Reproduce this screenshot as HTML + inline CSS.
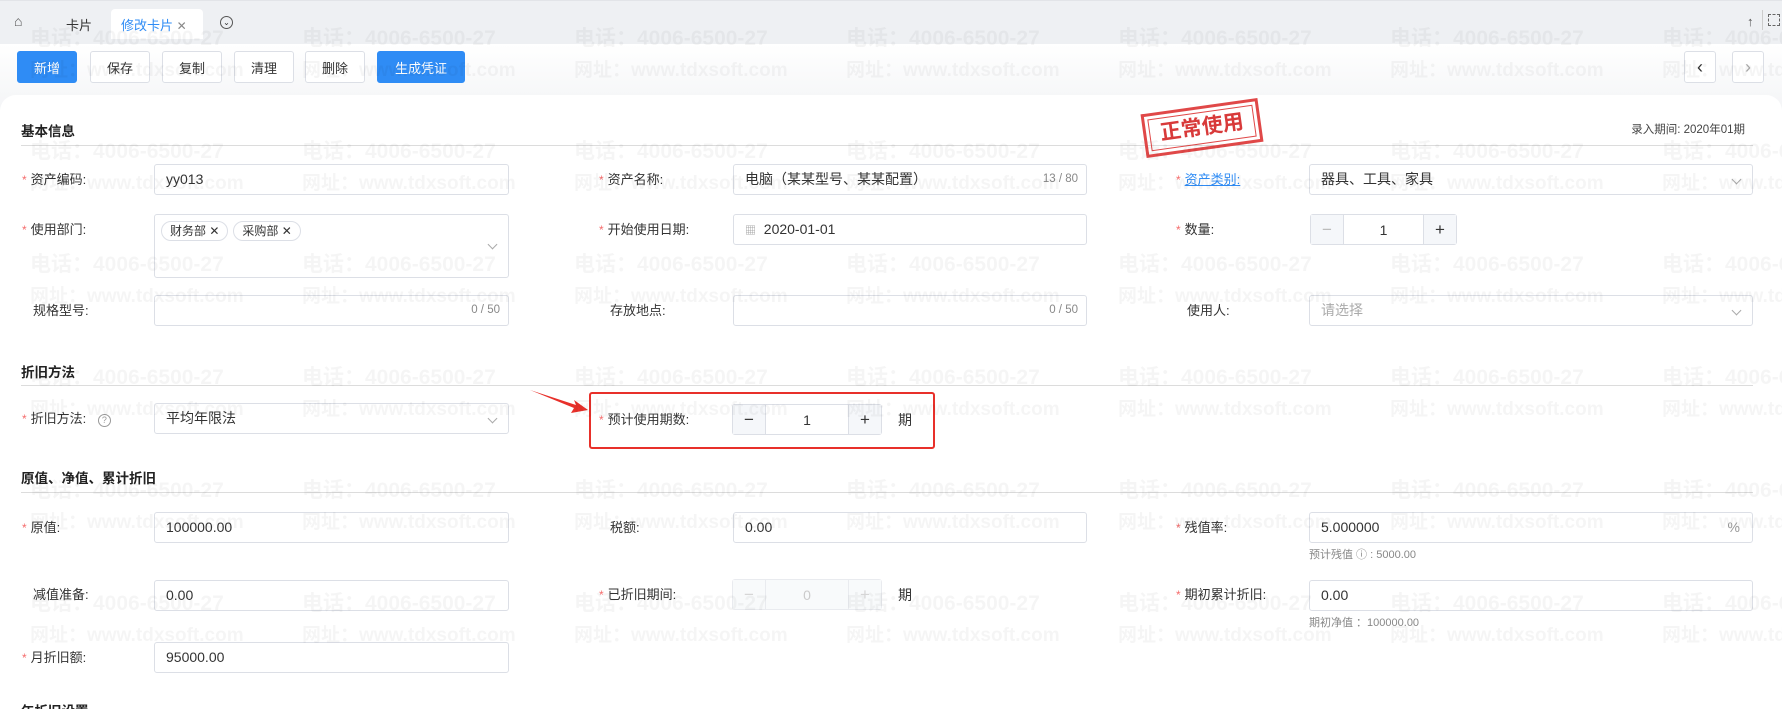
<!DOCTYPE html>
<html><head><meta charset="utf-8">
<style>
*{box-sizing:border-box;margin:0;padding:0}
html,body{width:1782px;height:709px;overflow:hidden}
body{background:#f0f2f5;font-family:"Liberation Sans","Noto Sans CJK SC",sans-serif;color:#333;font-size:13px}
#root{position:relative;width:1782px;height:709px;overflow:hidden}
.abs{position:absolute}
.tabbar{position:absolute;left:0;top:0;width:1782px;height:44px;background:#eef0f3;border-top:1px solid #e2e4e8}
.toolbar{position:absolute;left:0;top:44px;width:1782px;height:70px;background:linear-gradient(#fff,#f3f4f6)}
.btn{position:absolute;top:51px;height:32px;border:1px solid #dcdfe6;border-radius:3px;background:#fff;font-size:13px;display:flex;align-items:center;justify-content:center;color:#333}
.btn.p{background:#2f8cf5;border-color:#2f8cf5;color:#fff}
.card{position:absolute;left:0;top:95px;width:1782px;height:614px;background:#fff;border-radius:16px 16px 0 0}
.sec{position:absolute;left:21px;font-weight:bold;font-size:13.5px;color:#222}
.line{position:absolute;left:21px;width:1732px;height:1px;background:#dcdcdc}
.lab{position:absolute;font-size:13px;color:#333;line-height:16px}
.lab i{color:#f56c6c;font-style:normal;margin-right:4px;font-size:12px}
.inp{position:absolute;height:31px;border:1px solid #dcdfe6;border-radius:3px;background:#fff;font-size:14px;padding-left:11px;line-height:29px;color:#333}
.cnt{position:absolute;right:8px;top:0;font-size:11.5px;color:#888}
.chev{position:absolute;right:12px;top:11px;width:7px;height:7px;border-right:1px solid #aaa;border-bottom:1px solid #aaa;transform:rotate(45deg)}
.num{position:absolute;height:31px;border:1px solid #dcdfe6;border-radius:3px;background:#fff;display:flex}
.num span{display:flex;align-items:center;justify-content:center;font-size:17px;color:#333}
.num .s{width:32px;background:#f5f7fa}
.num .m{flex:1;border-left:1px solid #dcdfe6;border-right:1px solid #dcdfe6;font-size:14px}
.hint{position:absolute;font-size:11px;color:#888}
.wm{position:absolute;font-weight:bold;font-size:21px;color:rgba(0,0,0,0.04);white-space:nowrap;pointer-events:none}
.tag{display:inline-block;height:20px;border:1px solid #dcdfe6;border-radius:10px;font-size:12px;line-height:18px;padding:0 8px;margin-right:5px;color:#333}
</style></head><body><div id="root">
<div class="tabbar"></div>
<div class="abs" style="left:14px;top:13px;font-size:14px;color:#555">&#8962;</div>
<div class="abs" style="left:66px;top:15px;font-size:13px">卡片</div>
<div class="abs" style="left:111px;top:9px;width:92px;height:30px;background:#fff;border-radius:4px 4px 0 0"></div>
<div class="abs" style="left:121px;top:15px;font-size:13px;color:#2f8cf5">修改卡片 <span style="color:#888;font-size:12px">✕</span></div>
<div class="abs" style="left:220px;top:16px;width:13px;height:13px;border:1px solid #555;border-radius:50%;font-size:8px;line-height:11px;text-align:center">⌄</div>
<div class="abs" style="left:1747px;top:14px;font-size:13px;color:#555">↑</div>
<div class="abs" style="left:1762px;top:10px;width:1px;height:20px;background:#ccc"></div>
<div class="abs" style="left:1768px;top:14px;width:12px;height:12px;border:1px dashed #666"></div>
<div class="toolbar"></div>
<div class="btn p" style="left:17px;width:60px">新增</div>
<div class="btn" style="left:90px;width:60px">保存</div>
<div class="btn" style="left:162px;width:60px">复制</div>
<div class="btn" style="left:234px;width:60px">清理</div>
<div class="btn" style="left:305px;width:60px">删除</div>
<div class="btn p" style="left:377px;width:88px">生成凭证</div>
<div class="btn" style="left:1684px;width:32px;font-size:18px">‹</div>
<div class="btn" style="left:1732px;width:32px;font-size:18px;color:#aaa">›</div>
<div class="card"></div>

<div class="sec" style="top:120px">基本信息</div>
<div class="line" style="top:145px"></div>
<div class="abs" style="right:37px;top:121px;font-size:11.5px;color:#444">录入期间: 2020年01期</div>
<div class="abs" style="left:1143px;top:106px;width:118px;height:44px;border:3px solid #e04848;transform:rotate(-8deg);padding:3px">
<div style="border:1.5px solid #e04848;height:100%;color:#d83a3a;font-weight:bold;font-size:21px;text-align:center;line-height:30px">正常使用</div></div>

<div class="lab" style="left:22px;top:172px"><i>*</i>资产编码:</div>
<div class="inp" style="left:154px;top:164px;width:355px">yy013</div>
<div class="lab" style="left:599px;top:172px"><i>*</i>资产名称:</div>
<div class="inp" style="left:733px;top:164px;width:354px">电脑（某某型号、某某配置）<span class="cnt">13 / 80</span></div>
<div class="lab" style="left:1176px;top:172px"><i>*</i><span style="color:#2f8cf5;text-decoration:underline">资产类别:</span></div>
<div class="inp" style="left:1309px;top:164px;width:444px">器具、工具、家具<span class="chev"></span></div>

<div class="lab" style="left:22px;top:222px"><i>*</i>使用部门:</div>
<div class="inp" style="left:154px;top:214px;width:355px;height:64px;padding-left:6px;line-height:normal;padding-top:6px"><span class="tag">财务部 ✕</span><span class="tag">采购部 ✕</span><span class="chev" style="top:26px"></span></div>
<div class="lab" style="left:599px;top:222px"><i>*</i>开始使用日期:</div>
<div class="inp" style="left:733px;top:214px;width:354px"><span style="color:#999;font-size:11px">▦</span>&nbsp; 2020-01-01</div>
<div class="lab" style="left:1176px;top:222px"><i>*</i>数量:</div>
<div class="num" style="left:1310px;top:214px;width:147px"><span class="s" style="color:#bbb">−</span><span class="m">1</span><span class="s">+</span></div>

<div class="lab" style="left:33px;top:303px">规格型号:</div>
<div class="inp" style="left:154px;top:295px;width:355px"><span class="cnt">0 / 50</span></div>
<div class="lab" style="left:610px;top:303px">存放地点:</div>
<div class="inp" style="left:733px;top:295px;width:354px"><span class="cnt">0 / 50</span></div>
<div class="lab" style="left:1187px;top:303px">使用人:</div>
<div class="inp" style="left:1309px;top:295px;width:444px;color:#aaa">请选择<span class="chev"></span></div>

<div class="sec" style="top:361px">折旧方法</div>
<div class="line" style="top:385px"></div>
<div class="lab" style="left:22px;top:411px"><i>*</i>折旧方法: <span style="display:inline-block;width:13px;height:13px;border:1px solid #999;border-radius:50%;font-size:9px;text-align:center;line-height:11px;color:#999;margin-left:8px">?</span></div>
<div class="inp" style="left:154px;top:403px;width:355px">平均年限法<span class="chev"></span></div>
<svg class="abs" style="left:528px;top:388px" width="62" height="30"><polygon points="2,2 48,17 46,12 60,22 43,25 46,20" fill="#e8302a"/></svg>
<div class="abs" style="left:589px;top:392px;width:346px;height:57px;border:2px solid #e8302a;border-radius:3px"></div>
<div class="lab" style="left:599px;top:412px"><i>*</i>预计使用期数:</div>
<div class="num" style="left:732px;top:404px;width:150px"><span class="s">−</span><span class="m">1</span><span class="s">+</span></div>
<div class="lab" style="left:898px;top:412px;font-size:14px">期</div>

<div class="sec" style="top:467px">原值、净值、累计折旧</div>
<div class="line" style="top:492px"></div>
<div class="lab" style="left:22px;top:520px"><i>*</i>原值:</div>
<div class="inp" style="left:154px;top:512px;width:355px">100000.00</div>
<div class="lab" style="left:610px;top:520px">税额:</div>
<div class="inp" style="left:733px;top:512px;width:354px">0.00</div>
<div class="lab" style="left:1176px;top:520px"><i>*</i>残值率:</div>
<div class="inp" style="left:1309px;top:512px;width:444px">5.000000<span class="cnt" style="right:12px;font-size:14px;color:#999">%</span></div>
<div class="hint" style="left:1309px;top:546px">预计残值 ⓘ : 5000.00</div>

<div class="lab" style="left:33px;top:587px">减值准备:</div>
<div class="inp" style="left:154px;top:580px;width:355px">0.00</div>
<div class="lab" style="left:599px;top:587px"><i>*</i>已折旧期间:</div>
<div class="num" style="left:732px;top:579px;width:150px;background:#f5f7fa;opacity:.6"><span class="s" style="color:#bbb">−</span><span class="m" style="color:#aaa">0</span><span class="s" style="color:#bbb">+</span></div>
<div class="lab" style="left:898px;top:587px;font-size:14px">期</div>
<div class="lab" style="left:1176px;top:587px"><i>*</i>期初累计折旧:</div>
<div class="inp" style="left:1309px;top:580px;width:444px">0.00</div>
<div class="hint" style="left:1309px;top:614px">期初净值 ：100000.00</div>

<div class="lab" style="left:22px;top:650px"><i>*</i>月折旧额:</div>
<div class="inp" style="left:154px;top:642px;width:355px">95000.00</div>
<div class="sec" style="top:700px;height:9px;overflow:hidden">年折旧设置</div>

<div id="wm"></div>
<script>
var h='';var xs=[30,302,574,846,1118,1390,1662];
for(var r=0;r<6;r++){var y=22+r*113;for(var c=0;c<xs.length;c++){
h+='<div class="wm" style="left:'+xs[c]+'px;top:'+y+'px">电话：4006-6500-27</div>';
if(y+33<680)h+='<div class="wm" style="left:'+xs[c]+'px;top:'+(y+33)+'px;font-size:19px">网址：www.tdxsoft.com</div>';}}
document.getElementById('wm').innerHTML=h;
</script>
</div></body></html>
